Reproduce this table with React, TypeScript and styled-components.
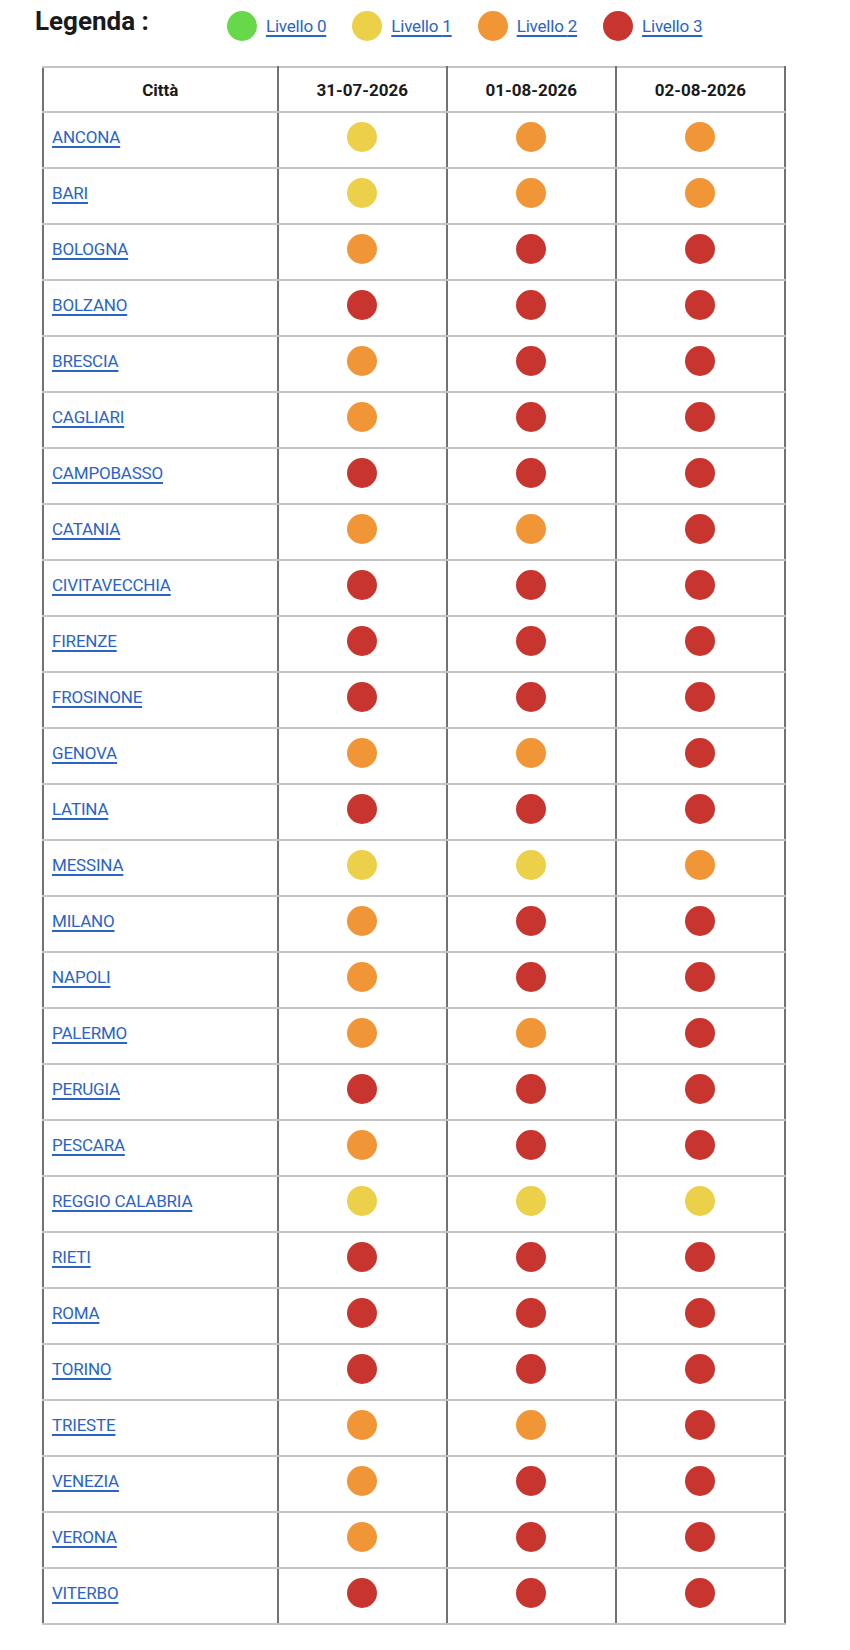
import React from 'react';
import styled, { createGlobalStyle } from 'styled-components';

type Level = 0 | 1 | 2 | 3;

const levelColors: Record<Level, string> = {
  0: '#66d84a',
  1: '#edd04a',
  2: '#f09637',
  3: '#c8352e',
};

const GlobalStyle = createGlobalStyle`
  body {
    margin: 0;
    background: #ffffff;
    font-family: Roboto, "Liberation Sans", sans-serif;
    color: #1a1a1a;
  }
`;

const Page = styled.div`
  padding: 4px 0 24px;
`;

const LegendBar = styled.div`
  display: flex;
  align-items: center;
  padding-left: 35px;
  height: 44px;
`;

const LegendTitle = styled.h3`
  margin: 0 78px 0 0;
  font-size: 26px;
  font-weight: 700;
  color: #1a1a1a;
  align-self: flex-start;
  line-height: 34px;
`;

const LegendItems = styled.div`
  display: flex;
  align-items: center;
  gap: 26px;
`;

const LegendItem = styled.div`
  display: flex;
  align-items: center;
  gap: 9px;
`;

const Dot = styled.span<{ $level: Level }>`
  display: inline-block;
  width: 30px;
  height: 30px;
  border-radius: 50%;
  background: ${(p) => levelColors[p.$level]};
  vertical-align: middle;
`;

const Link = styled.a`
  color: #2b64c6;
  text-decoration: underline;
  text-decoration-thickness: 2px;
  text-underline-offset: 3px;
  font-size: 17px;
  letter-spacing: -0.2px;
  cursor: pointer;
`;

const Table = styled.table`
  margin: 18px 0 0 42px;
  width: 744px;
  border-collapse: collapse;
  table-layout: fixed;
`;

const HeadCell = styled.th<{ $w: string }>`
  width: ${(p) => p.$w};
  height: 43px;
  padding: 0;
  font-size: 17px;
  font-weight: 700;
  color: #1a1a1a;
  text-align: center;
  border-top: 2px solid #c4c4c4;
  border-bottom: 2px solid #c4c4c4;
  border-left: 2px solid #727272;
  border-right: 2px solid #727272;
`;

const Cell = styled.td<{ $align?: 'left' | 'center' }>`
  height: 48px;
  padding: 0 8px 6px;
  text-align: ${(p) => p.$align ?? 'center'};
  vertical-align: middle;
  border-top: 2px solid #c4c4c4;
  border-bottom: 2px solid #c4c4c4;
  border-left: 2px solid #727272;
  border-right: 2px solid #727272;
`;

const rows: [string, Level, Level, Level][] = [
  ['ANCONA', 1, 2, 2],
  ['BARI', 1, 2, 2],
  ['BOLOGNA', 2, 3, 3],
  ['BOLZANO', 3, 3, 3],
  ['BRESCIA', 2, 3, 3],
  ['CAGLIARI', 2, 3, 3],
  ['CAMPOBASSO', 3, 3, 3],
  ['CATANIA', 2, 2, 3],
  ['CIVITAVECCHIA', 3, 3, 3],
  ['FIRENZE', 3, 3, 3],
  ['FROSINONE', 3, 3, 3],
  ['GENOVA', 2, 2, 3],
  ['LATINA', 3, 3, 3],
  ['MESSINA', 1, 1, 2],
  ['MILANO', 2, 3, 3],
  ['NAPOLI', 2, 3, 3],
  ['PALERMO', 2, 2, 3],
  ['PERUGIA', 3, 3, 3],
  ['PESCARA', 2, 3, 3],
  ['REGGIO CALABRIA', 1, 1, 1],
  ['RIETI', 3, 3, 3],
  ['ROMA', 3, 3, 3],
  ['TORINO', 3, 3, 3],
  ['TRIESTE', 2, 2, 3],
  ['VENEZIA', 2, 3, 3],
  ['VERONA', 2, 3, 3],
  ['VITERBO', 3, 3, 3],
];

const dates = ['31-07-2026', '01-08-2026', '02-08-2026'];

function App() {
  return (
    <Page>
      <GlobalStyle />
      <LegendBar>
        <LegendTitle>Legenda :</LegendTitle>
        <LegendItems>
          {([0, 1, 2, 3] as Level[]).map((lvl) => (
            <LegendItem key={lvl}>
              <Dot $level={lvl} />
              <Link>Livello {lvl}</Link>
            </LegendItem>
          ))}
        </LegendItems>
      </LegendBar>
      <Table>
        <thead>
          <tr>
            <HeadCell $w="31.7%">Città</HeadCell>
            {dates.map((d) => (
              <HeadCell key={d} $w="22.77%">
                {d}
              </HeadCell>
            ))}
          </tr>
        </thead>
        <tbody>
          {rows.map(([city, a, b, c]) => (
            <tr key={city}>
              <Cell $align="left">
                <Link>{city}</Link>
              </Cell>
              <Cell>
                <Dot $level={a} />
              </Cell>
              <Cell>
                <Dot $level={b} />
              </Cell>
              <Cell>
                <Dot $level={c} />
              </Cell>
            </tr>
          ))}
        </tbody>
      </Table>
    </Page>
  );
}

export default App;
